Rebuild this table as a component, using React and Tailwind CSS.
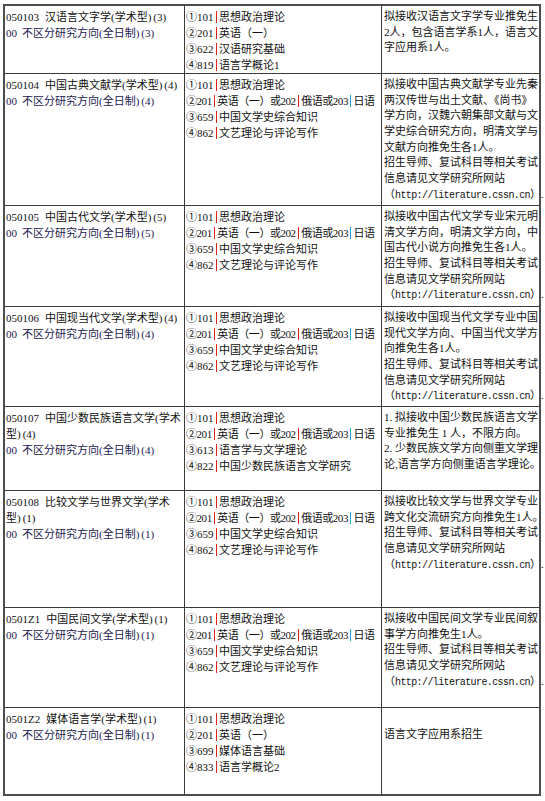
import React from "react";

const Bar = ({ color = "bg-[#e0201b]" }) => (
  <span className={`inline-block w-[1.5px] h-[12px] align-[-2px] mx-[2px] ${color}`} />
);

const Url = () => (
  <div className="whitespace-nowrap">
    （<span className="font-['Liberation_Mono'] text-[10px] tracking-[-0.6px]">http://literature.cssn.cn</span>）.
  </div>
);

const lit = [
  ["①101", "思想政治理论"],
  ["②201", "英语（一）", true],
  ["③659", "中国文学史综合知识"],
  ["④862", "文艺理论与评论写作"],
];

const Exam = ({ items }) => (
  <div className="pt-[3px] pl-[1px] overflow-hidden">
    {items.map(([code, text, foreign]) => (
      <div key={code} className={`whitespace-nowrap h-[16px] ${foreign ? "tracking-[-0.45px]" : ""}`}>
        {code}
        <Bar />
        {text}
        {foreign && (
          <>
            或202
            <Bar />
            俄语或203
            <Bar color="bg-[#1aa7d8]" />
            日语
          </>
        )}
      </div>
    ))}
  </div>
);

const rows = [
  {
    h: "h-[68px]",
    code: "050103",
    name: "汉语言文字学(学术型)",
    n: "(3)",
    exam: [
      ["①101", "思想政治理论"],
      ["②201", "英语（一）"],
      ["③622", "汉语研究基础"],
      ["④819", "语言学概论1"],
    ],
    note: ["拟接收汉语言文字学专业推免生", "2人，包含语言学系1人，语言文", "字应用系1人。"],
  },
  {
    h: "h-[132px]",
    code: "050104",
    name: "中国古典文献学(学术型)",
    n: "(4)",
    exam: lit,
    note: [
      "拟接收中国古典文献学专业先秦",
      "两汉传世与出土文献、《尚书》",
      "学方向，汉魏六朝集部文献与文",
      "学史综合研究方向，明清文学与",
      "文献方向推免生各1人。",
      "招生导师、复试科目等相关考试",
      "信息请见文学研究所网站",
    ],
    url: true,
  },
  {
    h: "h-[101px]",
    code: "050105",
    name: "中国古代文学(学术型)",
    n: "(5)",
    exam: lit,
    note: [
      "拟接收中国古代文学专业宋元明",
      "清文学方向，明清文学方向，中",
      "国古代小说方向推免生各1人。",
      "招生导师、复试科目等相关考试",
      "信息请见文学研究所网站",
    ],
    url: true,
  },
  {
    h: "h-[100px]",
    code: "050106",
    name: "中国现当代文学(学术型)",
    n: "(4)",
    exam: lit,
    note: [
      "拟接收中国现当代文学专业中国",
      "现代文学方向、中国当代文学方",
      "向推免生各1人。",
      "招生导师、复试科目等相关考试",
      "信息请见文学研究所网站",
    ],
    url: true,
  },
  {
    h: "h-[84px]",
    code: "050107",
    name: "中国少数民族语言文学(学术",
    rest: "型)",
    n: "(4)",
    exam: [
      ["①101", "思想政治理论"],
      ["②201", "英语（一）", true],
      ["③613", "语言学与文学理论"],
      ["④822", "中国少数民族语言文学研究"],
    ],
    note: [
      "1. 拟接收中国少数民族语言文学",
      "专业推免生 1 人，不限方向。",
      "2. 少数民族文学方向侧重文学理",
      "论,语言学方向侧重语言学理论。",
    ],
  },
  {
    h: "h-[117px]",
    code: "050108",
    name: "比较文学与世界文学(学术",
    rest: "型)",
    n: "(1)",
    exam: lit,
    note: [
      "拟接收比较文学与世界文学专业",
      "跨文化交流研究方向推免生1人。",
      "招生导师、复试科目等相关考试",
      "信息请见文学研究所网站",
    ],
    url: true,
  },
  {
    h: "h-[100px]",
    code: "0501Z1",
    name: "中国民间文学(学术型)",
    n: "(1)",
    exam: lit,
    note: [
      "拟接收中国民间文学专业民间叙",
      "事学方向推免生1人。",
      "招生导师、复试科目等相关考试",
      "信息请见文学研究所网站",
    ],
    url: true,
  },
  {
    h: "h-[86px]",
    code: "0501Z2",
    name: "媒体语言学(学术型)",
    n: "(1)",
    exam: [
      ["①101", "思想政治理论"],
      ["②201", "英语（一）"],
      ["③699", "媒体语言基础"],
      ["④833", "语言学概论2"],
    ],
    note: ["", "语言文字应用系招生"],
  },
];

export default function App() {
  return (
    <div className="bg-white w-[545px] h-[801px] pt-[4px] pl-[3px] font-['Liberation_Serif','Noto_Sans_CJK_SC',serif] text-[11px] leading-[16px] text-[#111]">
      <div className="w-[538px] border-2 border-[#4d4d4d]">
        {rows.map((r, i) => (
          <div
            key={i}
            className={`grid grid-cols-[180px_197px_157px] ${r.h} ${i < rows.length - 1 ? "border-b border-[#3a3a3a]" : ""}`}
          >
            <div className="border-r border-[#3a3a3a] pt-[3px] pl-[1px] overflow-hidden">
              <div className="whitespace-nowrap h-[16px]">
                {r.code}
                <span className="ml-[6px]">{r.name}</span>
                {!r.rest && <span className="ml-[2px]">{r.n}</span>}
              </div>
              {r.rest && (
                <div className="whitespace-nowrap h-[16px]">
                  {r.rest}
                  <span className="ml-[2px]">{r.n}</span>
                </div>
              )}
              <div className="whitespace-nowrap h-[16px] text-[#1b2050]">
                00<span className="ml-[5px]">不区分研究方向(全日制)</span>
                <span className="ml-[2px]">{r.n}</span>
              </div>
            </div>
            <div className="border-r border-[#3a3a3a]">
              <Exam items={r.exam} />
            </div>
            <div className="pt-[3px] pl-[2px] leading-[15.7px]">
              {r.note.map((n, k) => (
                <div key={k} className="whitespace-nowrap h-[15.7px]">
                  {n}
                </div>
              ))}
              {r.url && <Url />}
            </div>
          </div>
        ))}
      </div>
    </div>
  );
}
